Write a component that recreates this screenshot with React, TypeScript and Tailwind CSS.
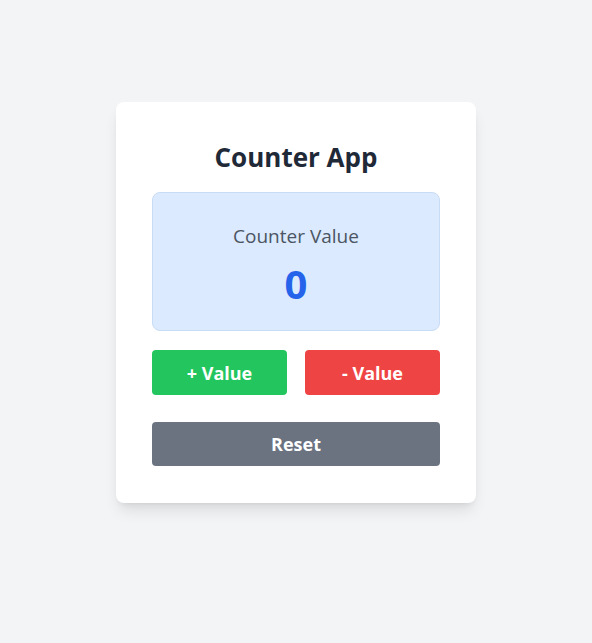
import React, { useState } from "react";

export default function App() {
  const [count, setCount] = useState(0);
  return (
    <div
      className="min-h-screen bg-[#f3f4f6] flex justify-center pt-[102px]"
      style={{ fontFamily: '"Open Sans", "Noto Sans", sans-serif' }}
    >
      <div className="w-[360px] h-fit bg-white rounded-lg shadow-[0_10px_15px_-3px_rgba(0,0,0,0.1),0_4px_6px_-4px_rgba(0,0,0,0.1)] px-9 pt-[37px] pb-[37px]">
        <h1 className="text-[26px] leading-9 font-bold text-[#1f2937] text-center mb-[17px]">
          Counter App
        </h1>
        <div className="bg-[#dbeafe] border border-[#c9dcf5] rounded-lg pt-[29px] pb-[26px] text-center">
          <p className="text-[19px] leading-7 text-[#4b5563]">Counter Value</p>
          <p className="text-[40px] leading-10 font-bold text-[#2563eb] mt-[14px]">{count}</p>
        </div>
        <div className="grid grid-cols-2 gap-[18px] mt-[19px]">
          <button
            onClick={() => setCount(count + 1)}
            className="bg-[#22c55e] text-white font-bold text-lg leading-7 h-[45px] rounded"
          >
            + Value
          </button>
          <button
            onClick={() => setCount(count - 1)}
            className="bg-[#ef4444] text-white font-bold text-lg leading-7 h-[45px] rounded"
          >
            - Value
          </button>
        </div>
        <button
          onClick={() => setCount(0)}
          className="w-full mt-[27px] bg-[#6b7280] text-white font-bold text-lg leading-7 h-[44px] rounded"
        >
          Reset
        </button>
      </div>
    </div>
  );
}
